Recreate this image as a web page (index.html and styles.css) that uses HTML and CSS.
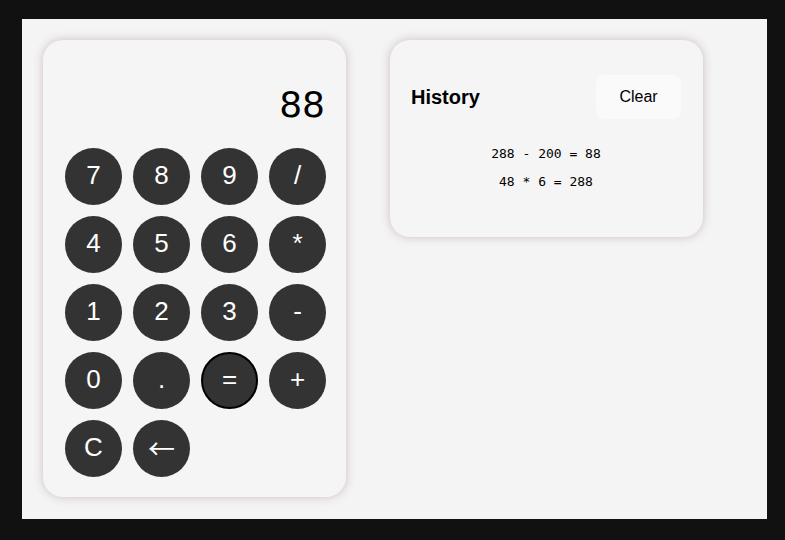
FILE: index.html
```html
<!DOCTYPE html>
<html>
<head>
<meta charset="utf-8">
<link rel="stylesheet" href="styles.css">
</head>
<body>
<div class="page">
  <div class="calc">
    <div class="display">88</div>
    <div class="keys">
      <button class="key">7</button>
      <button class="key">8</button>
      <button class="key">9</button>
      <button class="key">/</button>
      <button class="key">4</button>
      <button class="key">5</button>
      <button class="key">6</button>
      <button class="key">*</button>
      <button class="key">1</button>
      <button class="key">2</button>
      <button class="key">3</button>
      <button class="key">-</button>
      <button class="key">0</button>
      <button class="key">.</button>
      <button class="key focused">=</button>
      <button class="key">+</button>
      <button class="key">C</button>
      <button class="key arrow">←</button>
    </div>
  </div>
  <div class="history">
    <div class="history-head">
      <h2 class="history-title">History</h2>
      <button class="clear">Clear</button>
    </div>
    <ul class="history-list">
      <li>288 - 200 = 88</li>
      <li>48 * 6 = 288</li>
    </ul>
  </div>
</div>
</body>
</html>
```
FILE: styles.css
```css
html { background: #111111; }
body { margin: 0; font-family: "Liberation Sans", Arial, sans-serif; }
.page {
  margin: 19px 0 0 22px;
  width: 745px;
  height: 500px;
  box-sizing: border-box;
  padding: 21px;
  background: #f4f4f4;
  display: flex;
  align-items: flex-start;
  gap: 44px;
}
.calc {
  width: 303px;
  box-sizing: border-box;
  padding: 20px 20px 20px 22px;
  background: #f5f5f5;
  border-radius: 20px;
  box-shadow: 0 0 10px rgba(120, 70, 70, 0.3);
}
.display {
  padding-top: 24px;
  height: 42px;
  line-height: 42px;
  margin-bottom: 22px;
  text-align: right;
  font-family: "DejaVu Sans", sans-serif;
  font-size: 36px;
  color: #000;
  padding-right: 1px;
}
.keys {
  display: grid;
  grid-template-columns: repeat(4, 57px);
  grid-auto-rows: 57px;
  gap: 11px;
}
.key {
  width: 57px;
  height: 57px;
  border-radius: 50%;
  border: none;
  background: #333333;
  color: #fff;
  font-family: "Liberation Sans", Arial, sans-serif;
  font-size: 26px;
  padding: 0 0 2px;
}
.key.arrow {
  font-family: "Noto Sans CJK SC", sans-serif;
  font-size: 27px;
}
.key.focused {
  border: 2px solid #000;
}
.history {
  width: 313px;
  box-sizing: border-box;
  padding: 35px 22px 41px 21px;
  background: #f5f5f5;
  border-radius: 20px;
  box-shadow: 0 0 10px rgba(120, 70, 70, 0.3);
}
.history-head {
  display: flex;
  justify-content: space-between;
  align-items: center;
  height: 44px;
}
.history-title {
  margin: 0;
  font-size: 20px;
  font-weight: bold;
  color: #000;
}
.clear {
  width: 85px;
  height: 44px;
  border: none;
  border-radius: 8px;
  background: #fafafa;
  color: #000;
  font-family: "Liberation Sans", Arial, sans-serif;
  font-size: 16px;
  padding: 0;
}
.history-list {
  list-style: none;
  margin: 21px 0 0;
  padding: 0;
  text-align: center;
  font-family: "DejaVu Sans Mono", monospace;
  font-size: 13px;
  line-height: 28px;
  color: #000;
}
```
